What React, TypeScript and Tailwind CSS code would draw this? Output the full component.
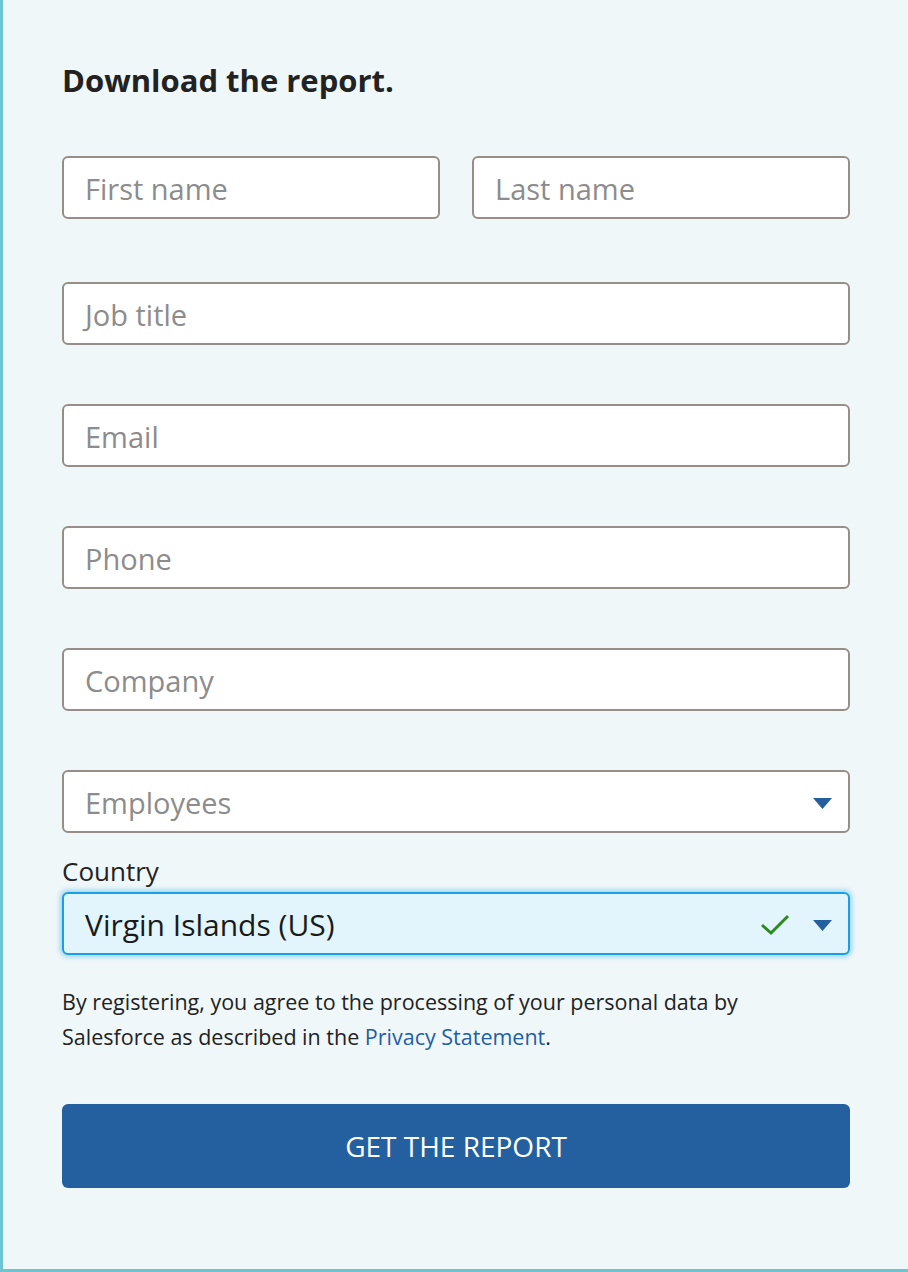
import React from "react";

const font = { fontFamily: '"Open Sans", "Noto Sans", sans-serif' };

function Field({ placeholder, dropdown }: { placeholder: string; dropdown?: boolean }) {
  return (
    <div className="relative flex h-[63px] items-center rounded-[6px] border-2 border-[#968e88] bg-white pl-[21px] pt-[3px]">
      <span className="text-[29px] leading-[36px] text-[#8c8c8c]">{placeholder}</span>
      {dropdown && (
        <svg className="absolute right-[16px] top-[26px]" width="19" height="11" viewBox="0 0 19 11">
          <path d="M0 0 H19 L9.5 11 Z" fill="#2460a0" />
        </svg>
      )}
    </div>
  );
}

export default function App() {
  return (
    <div
      className="h-[1272px] w-[908px] border-b-[3px] border-l-[3px] border-[#6cc5d0] bg-[#eff7f9] pl-[59px] pr-[58px] pt-[62px]"
      style={font}
    >
      <h1 className="text-[31px] font-bold leading-[36px] text-[#222]">Download the report.</h1>
      <div className="mt-[58px] grid grid-cols-2 gap-[32px]">
        <Field placeholder="First name" />
        <Field placeholder="Last name" />
      </div>
      <div className="mt-[63px] flex flex-col gap-[59px]">
        <Field placeholder="Job title" />
        <Field placeholder="Email" />
        <Field placeholder="Phone" />
        <Field placeholder="Company" />
        <Field placeholder="Employees" dropdown />
      </div>
      <div className="mt-[22px] text-[26px] leading-[32px] text-[#222]">Country</div>
      <div className="relative mt-[5px] flex h-[63px] items-center rounded-[6px] border-2 border-[#1a9fe0] bg-[#e2f5fc] pl-[21px] pt-[2px] shadow-[0_0_5px_2px_rgba(26,159,224,0.4)]">
        <span className="text-[30px] leading-[36px] text-[#1a1a1a]">Virgin Islands (US)</span>
        <svg className="absolute right-[58px] top-[20px]" width="30" height="22" viewBox="0 0 30 22">
          <path d="M2 11 L11 19 L28 2" fill="none" stroke="#2b8a1c" strokeWidth="3" />
        </svg>
        <svg className="absolute right-[16px] top-[26px]" width="19" height="11" viewBox="0 0 19 11">
          <path d="M0 0 H19 L9.5 11 Z" fill="#2460a0" />
        </svg>
      </div>
      <p className="mt-[29px] whitespace-nowrap text-[21.5px] leading-[35px] text-[#222]">
        By registering, you agree to the processing of your personal data by
        <br />
        Salesforce as described in the <span className="text-[#1f5ea8]">Privacy Statement</span>.
      </p>
      <button className="mt-[50px] flex h-[84px] w-full items-center justify-center rounded-[6px] bg-[#2460a0] text-[28px] text-white">
        GET THE REPORT
      </button>
    </div>
  );
}
